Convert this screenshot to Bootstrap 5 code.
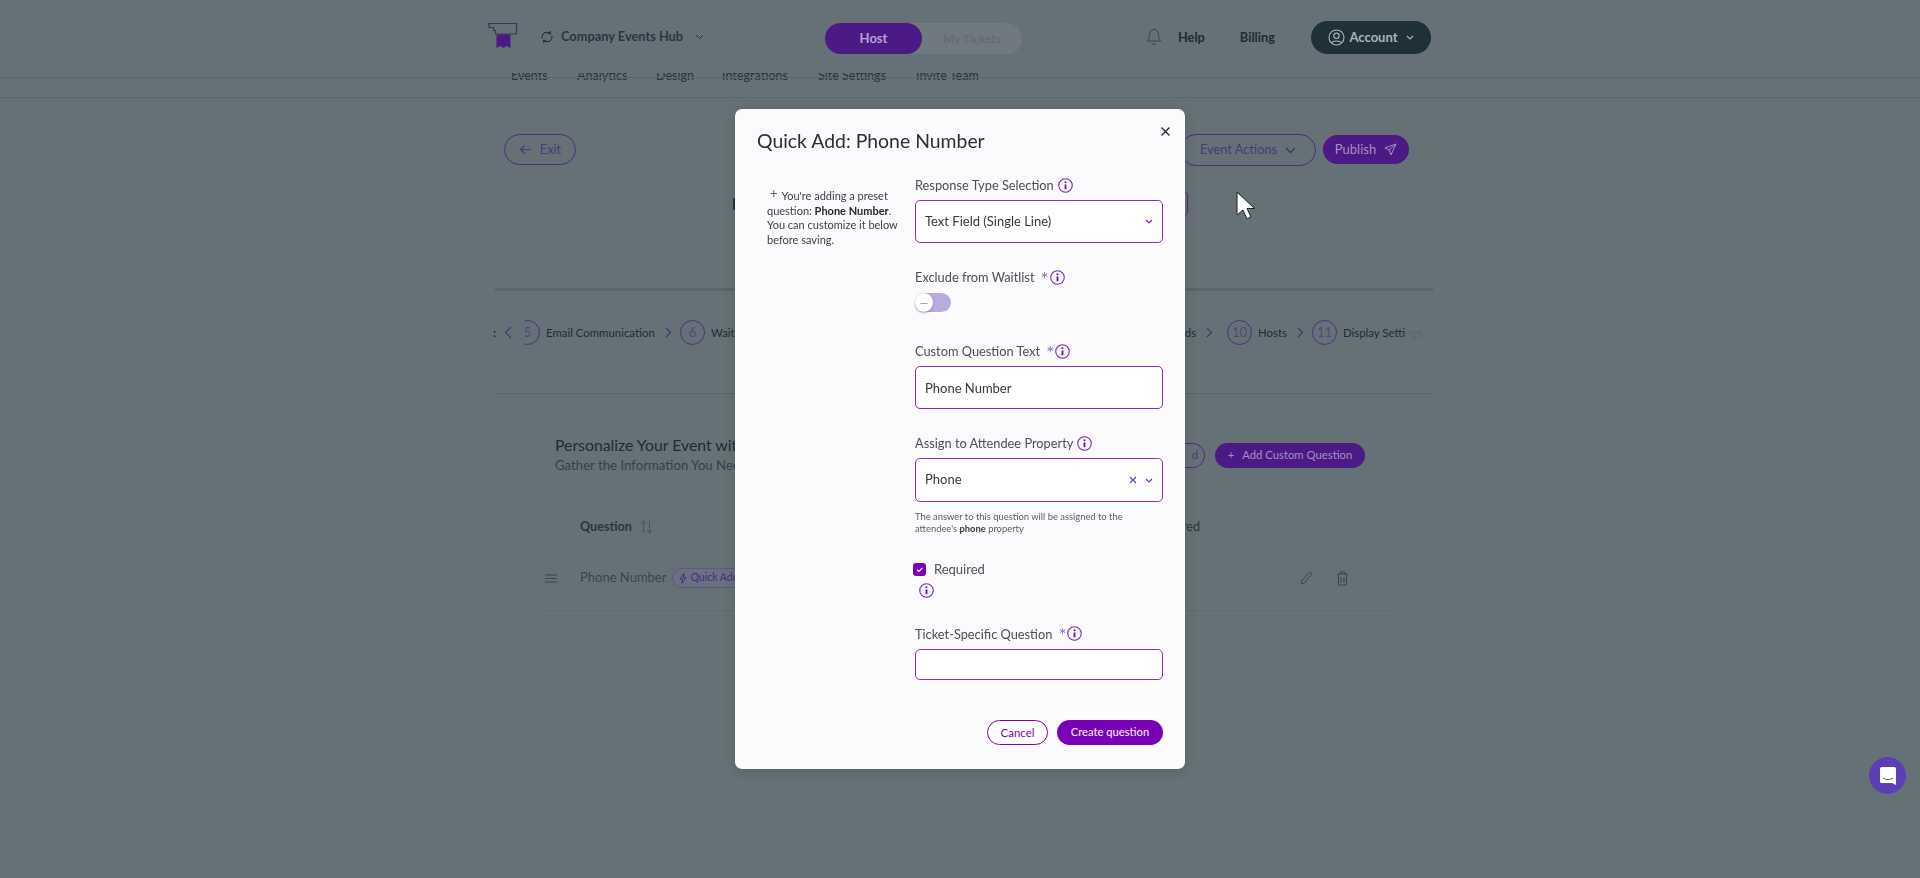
<!doctype html>
<html lang="en">
<head>
<meta charset="utf-8">
<title>Quick Add: Phone Number</title>
<link href="https://cdn.jsdelivr.net/npm/bootstrap@5.3.0/dist/css/bootstrap.min.css" rel="stylesheet">
<style>
html,body{height:100%;overflow:hidden}
body{background:#667177;font-family:Lato,"Liberation Sans",sans-serif;color:#1f2b33;position:relative}
.dim-top{height:73px;padding:21px 489px 0 488px}
.brand-name{font-size:12.8px;font-weight:700;color:#2a363d;margin-left:7px}
.sync-ic{margin-left:6px}
.brand-chev{margin-left:12px}
.host-switch{position:absolute;left:825px;top:23px;width:197px;height:31px;background:#6f797e;border-radius:16px}
.host-on{width:97px;height:31px;border-radius:16px;background:#4b1a85;color:#b9a2d4;font-size:13px;font-weight:700;display:flex;align-items:center;justify-content:center}
.host-off{width:100px;font-size:12px;color:#636d72;font-weight:700;text-align:center;line-height:31px}
.top-link{font-size:12.8px;font-weight:700;color:#1f2b33}
.help-link{margin-right:35px}
.bill-link{margin-right:36px}
.acct{background:#1f3038;color:#a9b4ba;border-radius:17px;height:33px;width:120px;font-size:13px;font-weight:700}
.tab-strip{height:25px;border-bottom:1px solid #5d686e;overflow:hidden;font-size:12.5px;color:#2a363d;font-weight:500;position:relative;line-height:16px}
.tab-strip span{position:absolute;top:-5px}
.tab-strip::after{content:"";position:absolute;left:0;right:0;top:4px;height:1px;background:#5d686e}
.page-wrap{margin-left:495px;width:938px}
.head-actions{padding:36px 24px 0 9px;height:190px}
.pill-line{border:1px solid #4a2f82;border-radius:16px;color:#4a3a76;font-size:12.8px;height:31px;background:transparent;padding:0}
.pill-fill{border:0;border-radius:15px;color:#a38fc4;background:#4b1a85;font-size:13px;padding:0}
.exit-b{width:72px}.acts-b{width:136px;height:32px;margin-right:7px}.pub-b{width:86px;height:29px;margin-top:1px}
.under-row{margin-top:25px}
.blob-l{width:8px;height:14px;border-radius:7px;background:#1f3038;margin:6px 0 0 229px}
.box-r{width:60px;height:25px;border:1px solid #4a2f82;border-radius:5px;margin-right:221px}
.thick-rule{height:3px;background:#5a656b;border:0;margin:0;opacity:1}
.step-row{height:102px;font-size:11.4px;color:#1f2b33;position:relative}
.step-num{width:25px;height:25px;border:1px solid #4a2f82;border-radius:50%;color:#4a4f72;font-size:13px;display:flex;align-items:center;justify-content:center;flex:none}
.step-cut{clip-path:inset(0 0 0 38%)}
.step-item{position:absolute;top:29px;display:flex;align-items:center;gap:6px;height:25px}
.fade-end{color:#5b666c}
.thin-rule{height:1px;background:#5a656b}
.q-head{padding:39px 68px 0 60px;height:120px}
.q-title{font-size:15.8px;color:#1f2b33;line-height:24px;font-weight:400;margin:0}
.q-sub{font-size:13.2px;color:#363f46;line-height:16px}
.q-btns{margin-top:10px}
.add-b{width:150px;height:25px;font-size:11.3px;border-radius:13px}
.ghost-b{width:30px;height:25px;border-radius:0 13px 13px 0;border-left:0;font-size:11.3px;margin-right:10px;text-align:right;padding-right:6px}
.t-head{padding:0 233px 0 85px;font-size:12.6px;font-weight:700;color:#2a363d;height:49px;line-height:20px;margin-top:3px}
.t-row{padding:0 84px 0 50px;height:24px;font-size:13px;color:#39444b}
.handle-ic{margin-right:23px;flex:none}
.quick-tag{border:1px solid #5b5a84;border-radius:10px;color:#3d2f80;background:#6b7080;font-size:10.5px;padding:1px 8px 1px 6px;margin-left:6px;width:90px;display:flex;align-items:center;gap:3px}
.t-line{margin:20px 0 0 45px;height:1px;background:#5f6a70;width:850px}
.pointer{position:absolute;left:1236px;top:191px;z-index:1060}
.chat-bub{position:absolute;left:1869px;top:757px;width:37px;height:37px;border-radius:50%;background:#5b3fb5;z-index:1060}
.modal-dialog.qa-dialog{max-width:450px;width:450px;margin:109px auto 0;height:660px}
.qa-dialog .modal-content{height:660px;border:0;border-radius:7px;background:#fbfafd;color:#3a3f47;box-shadow:0 2px 12px rgba(30,40,50,.2)}
.qa-dialog .modal-header{border:0;padding:18px 22px 0;display:block;height:66px;position:relative}
.qa-dialog .modal-title{font-size:19.4px;line-height:28px;font-weight:400;color:#2c2f36}
.qa-x{position:absolute;right:10px;top:12px;background:none;border:0;padding:0;line-height:0}
.qa-body{padding:0 22px 0 32px;display:flex;flex:none}
.qa-note{width:148px;font-size:11px;line-height:14.6px;color:#3d4149;padding:13px 8px 0 0;flex:none}
.qa-note b{font-weight:700;color:#25282e}
.qa-note i{font-style:normal;color:#565a62;font-size:13px;margin:0 4px 0 3px;line-height:10px;vertical-align:2px}
.qa-fields{width:248px;flex:none}
.qa-label{font-size:12.8px;line-height:20px;color:#4a4e56;margin:0 0 5px;display:flex;align-items:center;gap:4px}
.qa-star{color:#8f70c8;font-size:19px;line-height:14px;margin:3px -3px 0 2px}
.qa-ctl.form-control,.qa-ctl.form-select{border:1.5px solid #8a2dc0;border-radius:5px;font-size:13px;color:#33373e;padding:0 9px;background-color:#fff;box-shadow:none}
.qa-ctl.form-select{background-image:none;display:flex;align-items:center;justify-content:space-between;height:43px}
.h43{height:43px}.h44{height:44px!important}.h31{height:31px}
.qa-group{margin-bottom:24px}
.qa-g2{margin-bottom:28px}
.qa-g3{margin-bottom:24px}
.qa-tog.form-check{padding:0;margin:6px 0 0;min-height:0;height:20px}
.qa-tog .form-check-input{width:36px;height:19px;margin:0;float:none;background-color:#b9abdd;border:0;background-image:none;position:relative;border-radius:10px;opacity:1;display:block}
.qa-knob{position:absolute;left:0;top:0;width:18px;height:19px;background:#fff;border-radius:50%;box-shadow:0 1px 2px rgba(70,60,90,.45);display:flex;align-items:center;justify-content:center;color:#8d8f98;font-size:11px;line-height:1}
.qa-help{font-size:9.4px;line-height:12.4px;color:#5a5e66;margin:9px 0 27px}
.qa-help b{color:#33373e}
.qa-req{display:flex;align-items:center;margin:0 0 6px -2px;height:14px;font-size:13px;color:#4a4e56}
.qa-req .form-check-input{width:13px;height:13px;margin:0 8px 0 0;border-radius:3px;background-color:#7a00b8;border:0;flex:none;background-image:none;display:flex;align-items:center;justify-content:center;position:relative;opacity:1}
.qa-tick{position:absolute;left:0;top:0}
.qa-info-row{margin:0 0 27px 4px;height:14px;line-height:0}
.qa-tight{margin-bottom:5px}
.qa-foot{margin-top:auto;padding:0 22px 24px;display:flex;justify-content:flex-end;gap:9px}
.qa-cancel{width:61px;height:25px;border:1px solid #7a00b8;border-radius:13px;color:#7a00b8;background:#fff;font-size:11.5px;padding:0;line-height:23px}
.qa-create{width:106px;height:25px;border:0;border-radius:13px;color:#f3e6fa;background:#7a00b8;font-size:11.2px;padding:0;font-weight:500}
.qa-info{flex:none;display:block}
</style>
</head>
<body>

<div class="dim-top d-flex align-items-start position-relative">
  <svg width="30" height="30" viewBox="0 0 30 30" class="me-3 flex-none" aria-hidden="true">
    <path d="M1 2.500h27.500v10.500H7.500V9.500H5.500V6.500H1z" fill="none" stroke="#2f3b55" stroke-width="1.200"/>
    <path d="M8.500 13.500h14V27l-4-2-3 2-3-2-4 2z" fill="#4b1a85"/>
  </svg>
  <div class="d-flex align-items-center" style="height:32px">
    <svg width="14" height="14" viewBox="0 0 16 16" fill="none" stroke="#1f2b33" stroke-width="1.2" class="sync-ic" aria-hidden="true"><path d="M2.500 9.500A5.500 5.500 0 0 1 8 2.500c1.400 0 2.600.5 3.500 1.300M13.500 6.500A5.500 5.500 0 0 1 8 13.500c-1.400 0-2.600-.5-3.500-1.300"/><path d="M11.800 1.200v3h-3M4.200 14.800v-3h3"/></svg>
    <span class="brand-name">Company Events Hub</span>
    <svg width="9" height="6" viewBox="0 0 9 6" fill="none" stroke="#2a363d" stroke-width="1" class="brand-chev" aria-hidden="true"><path d="M1 1l3.500 3.500L8 1"/></svg>
  </div>
  <div class="host-switch d-flex"><div class="host-on">Host</div><div class="host-off">My Tickets</div></div>
  <div class="d-flex align-items-center ms-auto" style="height:33px">
    <svg width="16" height="19" viewBox="0 0 16 19" fill="none" stroke="#39444b" stroke-width="1" class="me-3" aria-hidden="true"><path d="M8 1.500c-3 0-4.500 2.300-4.500 5 0 4-2 5.500-2 6.500h13c0-1-2-2.500-2-6.500 0-2.700-1.500-5-4.500-5zM6 15.500c.5 1.300 3.500 1.300 4 0"/></svg>
    <span class="top-link help-link">Help</span>
    <span class="top-link bill-link">Billing</span>
    <div class="acct d-flex align-items-center justify-content-center gap-1">
      <svg width="17" height="17" viewBox="0 0 17 17" fill="none" stroke="#a9b4ba" stroke-width="1.100" aria-hidden="true"><circle cx="8.500" cy="8.500" r="7.500"/><circle cx="8.500" cy="6.800" r="2.700"/><path d="M3.700 14c1-2.600 8.600-2.600 9.600 0"/></svg>
      <span>Account</span>
      <svg width="8" height="5" viewBox="0 0 8 5" fill="none" stroke="#a9b4ba" stroke-width="1.100" class="ms-1" aria-hidden="true"><path d="M1 1l3 3 3-3"/></svg>
    </div>
  </div>
</div>

<div class="tab-strip">
  <span style="left:511px">Events</span><span style="left:577px">Analytics</span><span style="left:656px">Design</span><span style="left:722px">Integrations</span><span style="left:818px">Site Settings</span><span style="left:916px">Invite Team</span>
</div>

<div class="page-wrap">
  <div class="head-actions">
    <div class="d-flex align-items-start justify-content-between">
      <button type="button" class="btn pill-line exit-b d-flex align-items-center justify-content-center gap-2">
        <svg width="13" height="11" viewBox="0 0 13 11" fill="none" stroke="#4a3a76" stroke-width="1.200" aria-hidden="true"><path d="M12 5.500H1.500M5.500 1.500l-4 4 4 4"/></svg>Exit</button>
      <div class="d-flex align-items-start">
        <button type="button" class="btn pill-line acts-b d-flex align-items-center justify-content-center gap-2">Event Actions
          <svg width="11" height="7" viewBox="0 0 11 7" fill="none" stroke="#3d3470" stroke-width="1.400" aria-hidden="true"><path d="M1 1l4.500 4.500L10 1"/></svg></button>
        <button type="button" class="btn pill-fill pub-b d-flex align-items-center justify-content-center gap-2">Publish
          <svg width="13" height="13" viewBox="0 0 13 13" fill="none" stroke="#a38fc4" stroke-width="1" aria-hidden="true"><path d="M12 1L1 5l4.200 2L7 12zM12 1L5.200 7"/></svg></button>
      </div>
    </div>
    <div class="under-row d-flex justify-content-between">
      <div class="blob-l"></div>
      <div class="box-r"></div>
    </div>
  </div>
  <hr class="thick-rule">
  <div class="step-row">
    <span class="step-item" style="left:-2px;font-weight:700">:</span>
    <span class="step-item" style="left:9px"><svg width="8" height="13" viewBox="0 0 8 13" fill="none" stroke="#3f3a72" stroke-width="1.200" aria-hidden="true"><path d="M7 1L1.500 6.500 7 12"/></svg></span>
    <span class="step-item" style="left:20px"><span class="step-num step-cut">5</span>Email Communication
      <svg width="7" height="11" viewBox="0 0 7 11" fill="none" stroke="#3f3a72" stroke-width="1.300" class="ms-1" aria-hidden="true"><path d="M1 1l4.500 4.500L1 10"/></svg></span>
    <span class="step-item" style="left:185px"><span class="step-num">6</span>Waitlist</span>
    <span class="step-item" style="left:672px">Fields
      <svg width="7" height="11" viewBox="0 0 7 11" fill="none" stroke="#3f3a72" stroke-width="1.300" class="ms-1" aria-hidden="true"><path d="M1 1l4.500 4.500L1 10"/></svg></span>
    <span class="step-item" style="left:732px"><span class="step-num">10</span>Hosts
      <svg width="7" height="11" viewBox="0 0 7 11" fill="none" stroke="#3f3a72" stroke-width="1.300" class="ms-1" aria-hidden="true"><path d="M1 1l4.500 4.500L1 10"/></svg></span>
    <span class="step-item" style="left:817px"><span class="step-num">11</span><span>Display Sett<span class="fade-end">ings</span></span></span>
  </div>
  <div class="thin-rule"></div>
  <div class="q-head d-flex justify-content-between align-items-start">
    <div>
      <h2 class="q-title">Personalize Your Event with Custom Questions</h2>
      <div class="q-sub">Gather the Information You Need</div>
    </div>
    <div class="d-flex q-btns">
      <button type="button" class="btn pill-line ghost-b">d</button>
      <button type="button" class="btn pill-fill add-b d-flex align-items-center justify-content-center gap-2"><span>+</span>Add Custom Question</button>
    </div>
  </div>
  <div class="t-head d-flex justify-content-between align-items-start">
    <span class="d-flex align-items-center gap-2">Question
      <svg width="13" height="14" viewBox="0 0 13 14" fill="none" stroke="#4a555c" stroke-width="1.100" aria-hidden="true"><path d="M3.500 13V1.500M1 4l2.500-3L6 4M9.500 1v11.500M7 10l2.500 3 2.500-3"/></svg></span>
    <span class="fw-normal">Required</span>
  </div>
  <div class="t-row d-flex align-items-center">
    <svg width="12" height="9" viewBox="0 0 12 9" stroke="#39444b" stroke-width="1" class="handle-ic" aria-hidden="true"><path d="M0 1h12M0 4.500h12M0 8h12"/></svg>
    <span>Phone Number</span>
    <span class="quick-tag text-nowrap"><svg width="8" height="11" viewBox="0 0 8 11" fill="none" stroke="#3d2f80" stroke-width="1" aria-hidden="true"><path d="M5 .5L1 6h2.500L3 10.500 7 4.500H4.500z"/></svg>Quick Add</span>
    <svg width="13" height="14" viewBox="0 0 13 14" fill="none" stroke="#39444b" stroke-width="1" class="ms-auto" aria-hidden="true"><path d="M1 13l1-3.500L9.500 1.500c1-.8 2.800.8 2 2L4.500 12z"/></svg>
    <svg width="13" height="15" viewBox="0 0 13 15" fill="none" stroke="#39444b" stroke-width="1" style="margin-left:23px" aria-hidden="true"><path d="M1 3h11M4.500 3V1h4v2M2.500 3v11h8V3M5 6v5.500M8 6v5.500"/></svg>
  </div>
  <div class="t-line"></div>
</div>

<svg class="pointer" width="20" height="30" viewBox="0 0 20 30" aria-hidden="true"><path d="M1 1v23l6-5 4 9 4-2-4-8.500h7.500z" fill="#fff" stroke="#1b2226" stroke-width="1"/></svg>

<div class="chat-bub d-flex align-items-center justify-content-center">
  <svg width="16" height="18" viewBox="0 0 16 18" aria-hidden="true"><path d="M1.500 0h13A1.500 1.500 0 0 1 16 1.500V18l-4-2H1.500A1.500 1.500 0 0 1 0 14.500v-13A1.500 1.500 0 0 1 1.500 0z" fill="#fff"/><path d="M3 11c3 2 7 2 10 0" fill="none" stroke="#5b3fb5" stroke-width="1"/></svg>
</div>

<svg width="0" height="0" class="position-absolute" aria-hidden="true">
  <symbol id="info-i" viewBox="0 0 14 14"><circle cx="7" cy="7" r="6.300" fill="none" stroke="#7a22b8" stroke-width="1"/><circle cx="7" cy="4" r="1" fill="#5a1a90"/><path d="M7 6v4.500" stroke="#5a1a90" stroke-width="1.700"/></symbol>
</svg>

<div class="modal d-block" tabindex="-1" role="dialog" aria-modal="true">
  <div class="modal-dialog qa-dialog">
    <div class="modal-content">
      <div class="modal-header">
        <h5 class="modal-title">Quick Add: Phone Number</h5>
        <button type="button" class="qa-x" aria-label="Close">
          <svg width="20" height="20" viewBox="0 0 20 20" stroke="#25282e" stroke-width="1.300" aria-hidden="true"><path d="M6.500 6.500l8 8M14.500 6.500l-8 8"/></svg>
        </button>
      </div>
      <div class="qa-body">
        <div class="qa-note"><i>+</i>You're adding a preset question: <b>Phone Number</b>. You can customize it below before saving.</div>
        <div class="qa-fields">
          <div class="qa-group">
            <label class="qa-label">Response Type Selection <svg class="qa-info" width="15" height="15" aria-hidden="true"><use href="#info-i"/></svg></label>
            <div class="form-select qa-ctl">Text Field (Single Line)
              <svg width="8" height="5" viewBox="0 0 8 5" fill="none" stroke="#7a22b8" stroke-width="1.100" aria-hidden="true"><path d="M1 1l3 3 3-3"/></svg></div>
          </div>
          <div class="qa-g2">
            <label class="qa-label">Exclude from Waitlist <span class="qa-star">*</span><svg class="qa-info" width="15" height="15" aria-hidden="true"><use href="#info-i"/></svg></label>
            <div class="form-check form-switch qa-tog"><div class="form-check-input" role="switch" aria-checked="false"><span class="qa-knob">&#8212;</span></div></div>
          </div>
          <div class="qa-g3">
            <label class="qa-label">Custom Question Text <span class="qa-star">*</span><svg class="qa-info" width="15" height="15" aria-hidden="true"><use href="#info-i"/></svg></label>
            <input class="form-control qa-ctl h43" type="text" value="Phone Number" aria-label="Custom Question Text">
          </div>
          <div>
            <label class="qa-label">Assign to Attendee Property <svg class="qa-info" width="15" height="15" aria-hidden="true"><use href="#info-i"/></svg></label>
            <div class="form-select qa-ctl h44">Phone
              <span class="d-flex align-items-center gap-2">
                <svg width="8" height="8" viewBox="0 0 8 8" stroke="#6a3fc0" stroke-width="1.200" aria-hidden="true"><path d="M1 1l6 6M7 1L1 7"/></svg>
                <svg width="8" height="5" viewBox="0 0 8 5" fill="none" stroke="#7a22b8" stroke-width="1.100" aria-hidden="true"><path d="M1 1l3 3 3-3"/></svg>
              </span></div>
            <div class="qa-help">The answer to this question will be assigned to the attendee's <b>phone</b> property</div>
          </div>
          <div class="qa-req"><span class="form-check-input"><svg class="qa-tick" width="13" height="13" viewBox="0 0 13 13" fill="none" stroke="#fff" stroke-width="1.200" aria-hidden="true"><path d="M4 6.800l1.800 1.700L9.300 5"/></svg></span>Required</div>
          <div class="qa-info-row"><svg class="qa-info" width="15" height="15" aria-hidden="true"><use href="#info-i"/></svg></div>
          <div>
            <label class="qa-label qa-tight">Ticket-Specific Question <span class="qa-star">*</span><svg class="qa-info" width="15" height="15" aria-hidden="true"><use href="#info-i"/></svg></label>
            <input class="form-control qa-ctl h31" type="text" aria-label="Ticket-Specific Question">
          </div>
        </div>
      </div>
      <div class="qa-foot">
        <button type="button" class="btn qa-cancel">Cancel</button>
        <button type="button" class="btn qa-create">Create question</button>
      </div>
    </div>
  </div>
</div>

<script src="https://cdn.jsdelivr.net/npm/bootstrap@5.3.0/dist/js/bootstrap.bundle.min.js"></script>
</body>
</html>
